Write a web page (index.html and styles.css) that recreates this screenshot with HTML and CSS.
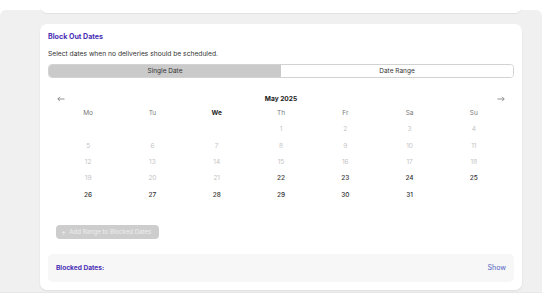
FILE: index.html
```html
<!DOCTYPE html>
<html lang="en">
<head>
    <meta charset="UTF-8">
    <meta name="viewport" content="width=device-width, initial-scale=1.0">
    <title>Block Out Dates</title>
    <link rel="stylesheet" href="styles.css">
</head>
<body>
    <div class="page">
        <div class="prev-card"></div>

        <div class="card">
            <h2 class="title">Block Out Dates</h2>
            <p class="subtitle">Select dates when no deliveries should be scheduled.</p>

            <div class="tabs">
                <button class="tab active">Single Date</button>
                <button class="tab">Date Range</button>
            </div>

            <div class="calendar">
                <div class="cal-nav">
                    <button class="nav-btn">
                        <svg width="8" height="6" viewBox="0 0 8 6"><path d="M7.5 3H0.8M3 0.8L0.8 3L3 5.2" fill="none" stroke="#777" stroke-width="0.8"/></svg>
                    </button>
                    <span class="month">May 2025</span>
                    <button class="nav-btn">
                        <svg width="8" height="6" viewBox="0 0 8 6"><path d="M0.5 3H7.2M5 0.8L7.2 3L5 5.2" fill="none" stroke="#777" stroke-width="0.8"/></svg>
                    </button>
                </div>
                <div class="cal-grid" id="grid">
                    <div class="wd">Mo</div>
                    <div class="wd">Tu</div>
                    <div class="wd today">We</div>
                    <div class="wd">Th</div>
                    <div class="wd">Fr</div>
                    <div class="wd">Sa</div>
                    <div class="wd">Su</div>
                </div>
            </div>

            <div class="actions">
                <button class="add-btn" disabled><span class="plus">+</span>Add Range to Blocked Dates</button>
            </div>

            <div class="blocked">
                <span class="blocked-label">Blocked Dates:</span>
                <a class="show-link" href="#">Show</a>
            </div>
        </div>
    </div>

    <script>
        const grid = document.getElementById("grid");
        // May 2025 starts on a Thursday, week starts Monday
        const offset = 3;
        const firstActive = 22;

        for (let i = 0; i < offset; i++) {
            grid.appendChild(document.createElement("div"));
        }
        for (let d = 1; d <= 31; d++) {
            const cell = document.createElement("div");
            cell.className = d < firstActive ? "day past" : "day";
            cell.textContent = d;
            grid.appendChild(cell);
        }
    </script>
</body>
</html>
```

FILE: styles.css
```css
* {
    box-sizing: border-box;
}

html, body {
    height: 305px;
}

body {
    margin: 0;
    padding-top: 10px;
    background: #ffffff;
    font-family: Inter, "Noto Sans", sans-serif;
    color: #333;
    overflow: hidden;
}

.page {
    height: 283px;
    background: #f0f0f0;
    border-radius: 6px 6px 0 0;
    padding: 0 20px 0 40px;
    display: flex;
    flex-direction: column;
    border-bottom: 1px solid #e8e8e8;
}

.prev-card {
    margin-top: -10px;
    height: 13px;
    flex: none;
    background: #fff;
    border-radius: 0 0 7px 7px;
    box-shadow: 0 1px 1px rgba(0, 0, 0, 0.06);
}

.card {
    margin-top: 11px;
    height: 266px;
    flex: none;
    background: #fff;
    border-radius: 7px;
    box-shadow: 0 1px 2px rgba(0, 0, 0, 0.08);
    padding: 8px 8px 8px;
    display: flex;
    flex-direction: column;
}

.title {
    margin: 0;
    font-size: 7.1px;
    line-height: 10px;
    font-weight: 700;
    color: #4a2fb5;
}

.subtitle {
    margin: 7px 0 0;
    font-size: 6.7px;
    line-height: 10px;
    color: #333;
}

.tabs {
    margin-top: 5px;
    height: 14px;
    flex: none;
    display: flex;
    border: 1px solid #d2d2d2;
    border-radius: 4px;
    overflow: hidden;
}

.tab {
    flex: 1;
    border: none;
    background: #fff;
    font-family: inherit;
    font-size: 6.5px;
    color: #333;
    padding: 0;
}

.tab.active {
    background: #cacaca;
}

.calendar {
    padding: 0 8px;
    margin-top: 14px;
}

.cal-nav {
    height: 13px;
    display: flex;
    align-items: center;
    justify-content: space-between;
    padding: 0 1px;
}

.nav-btn {
    border: none;
    background: none;
    padding: 0;
    width: 8px;
    height: 8px;
    display: flex;
    align-items: center;
}

.month {
    font-size: 6.6px;
    font-weight: 700;
    color: #222;
}

.cal-grid {
    display: grid;
    grid-template-columns: repeat(7, 1fr);
    grid-auto-rows: 16.3px;
    align-items: center;
    text-align: center;
    font-size: 6.5px;
}

.wd {
    color: #777;
}

.wd.today {
    color: #222;
    font-weight: 700;
}

.day {
    color: #333;
    font-weight: 500;
}

.day.past {
    color: #c4c4c4;
    font-weight: 400;
}

.actions {
    margin-top: 22px;
    padding: 0 8px;
}

.add-btn {
    height: 14px;
    width: 103px;
    border: none;
    border-radius: 4px;
    background: #cdcdcd;
    color: #eeeeee;
    font-family: inherit;
    font-size: 6.1px;
    padding: 0 0 0 5px;
    display: flex;
    align-items: center;
    white-space: nowrap;
}

.plus {
    font-size: 8px;
    line-height: 8px;
    margin-right: 3px;
}

.blocked {
    margin-top: 15px;
    height: 28px;
    flex: none;
    background: #f7f7f7;
    border-radius: 5px;
    padding: 0 8px;
    display: flex;
    align-items: center;
    justify-content: space-between;
}

.blocked-label {
    font-size: 6.6px;
    font-weight: 700;
    color: #4a2fb5;
}

.show-link {
    font-size: 7px;
    color: #4f62c0;
    text-decoration: none;
}
```
